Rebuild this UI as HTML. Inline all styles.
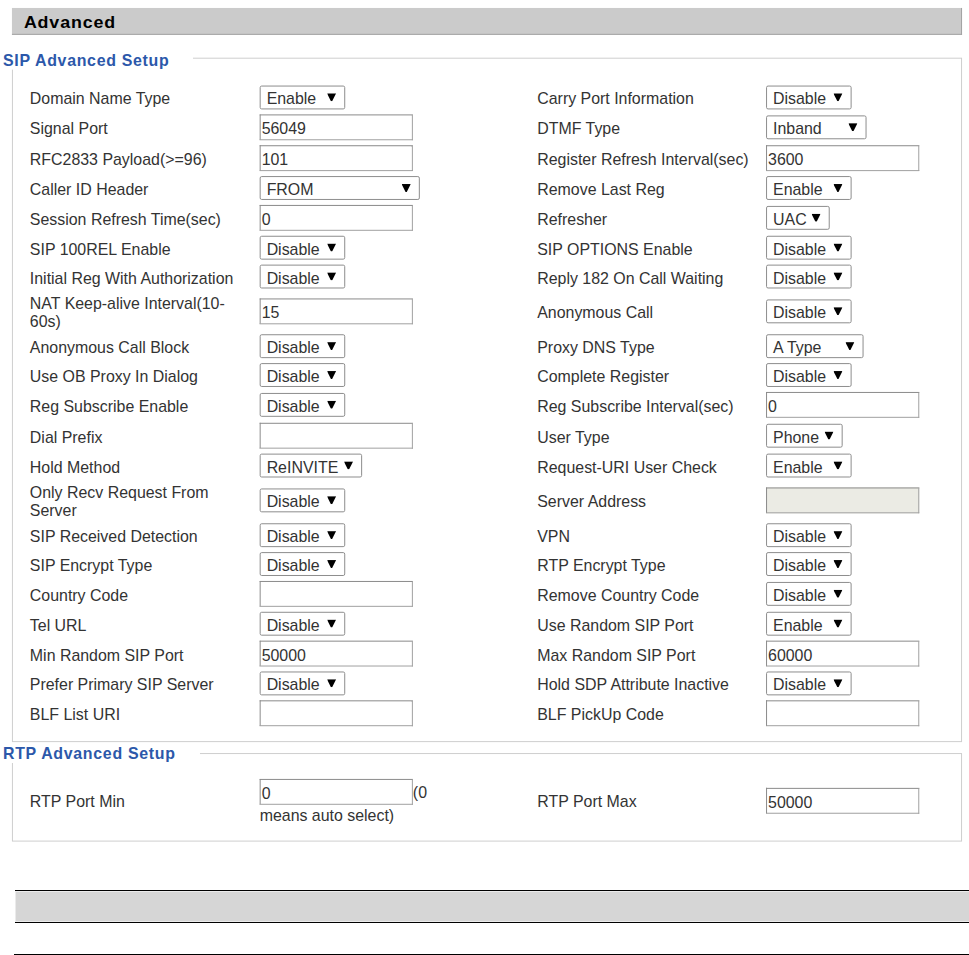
<!DOCTYPE html>
<html><head><meta charset="utf-8"><title>Advanced</title>
<style>
html,body{margin:0;padding:0;background:#fff;width:969px;height:955px;overflow:hidden}
body{font-family:"Liberation Sans",sans-serif;font-size:16px;color:#333}
#root{position:absolute;left:0;top:0;width:974px;height:960px;transform:scale(0.99487,0.99479);transform-origin:0 0;background:#fff}
.abs{position:absolute}
#hdr{position:absolute;left:12px;top:8px;width:954px;height:26px;background:#cbcbcb;border-right:1px solid #a3a3a3;border-bottom:1px solid #a3a3a3}
#hdr span{position:absolute;left:12px;top:5.5px;font-size:16.6px;font-weight:bold;letter-spacing:0.8px;line-height:18px;color:#000;transform:scaleX(1.08);transform-origin:0 0;white-space:nowrap}
.fs{position:absolute;border:1px solid #cecece}
.lg{position:absolute;background:#fff;color:#2c58aa;font-weight:bold;letter-spacing:0.7px;line-height:18px;padding-right:24px}
.lb{position:absolute;line-height:18px;white-space:nowrap}
.sel{position:absolute;height:22px;border:1px solid #8c8c8c;border-radius:2px;background:#fff}
.st{position:absolute;left:6px;top:4px;line-height:18px}
.ar{position:absolute;top:6.6px;width:9.5px;height:8.3px;background:#000;clip-path:polygon(0 0,100% 0,56% 100%,44% 100%)}
.inp{position:absolute;width:152px;height:24px;border:1px solid;border-color:#8a8a8a #a0a0a0 #a0a0a0 #8a8a8a;background:#fff}
.inp.dis{background:#ebebe4}
.it{position:absolute;left:1px;top:5px;line-height:18px}
.bar{position:absolute;left:15px;width:954px;background:#000;height:1px}
</style></head><body><div id="root">
<div id="hdr"><span>Advanced</span></div>

<div class="fs" style="left:12px;top:58px;width:953px;height:686px"></div>
<div class="lg" style="left:3px;top:52px">SIP Advanced Setup</div>
<div class="lb" style="left:30px;top:91px">Domain Name Type</div>
<div class="sel" style="left:261px;top:86px;width:84px"><span class="st">Enable</span><i class="ar" style="left:66.5px"></i></div>
<div class="lb" style="left:540px;top:91px">Carry Port Information</div>
<div class="sel" style="left:770px;top:86px;width:84px"><span class="st">Disable</span><i class="ar" style="left:66.5px"></i></div>
<div class="lb" style="left:30px;top:121px">Signal Port</div>
<div class="inp" style="left:261px;top:115px"><span class="it">56049</span></div>
<div class="lb" style="left:540px;top:121px">DTMF Type</div>
<div class="sel" style="left:770px;top:116px;width:99px"><span class="st">Inband</span><i class="ar" style="left:81.5px"></i></div>
<div class="lb" style="left:30px;top:152px">RFC2833 Payload(&gt;=96)</div>
<div class="inp" style="left:261px;top:146px"><span class="it">101</span></div>
<div class="lb" style="left:540px;top:152px">Register Refresh Interval(sec)</div>
<div class="inp" style="left:770px;top:146px"><span class="it">3600</span></div>
<div class="lb" style="left:30px;top:182px">Caller ID Header</div>
<div class="sel" style="left:261px;top:177px;width:159px"><span class="st">FROM</span><i class="ar" style="left:141.5px"></i></div>
<div class="lb" style="left:540px;top:182px">Remove Last Reg</div>
<div class="sel" style="left:770px;top:177px;width:84px"><span class="st">Enable</span><i class="ar" style="left:66.5px"></i></div>
<div class="lb" style="left:30px;top:212px">Session Refresh Time(sec)</div>
<div class="inp" style="left:261px;top:206px"><span class="it">0</span></div>
<div class="lb" style="left:540px;top:212px">Refresher</div>
<div class="sel" style="left:770px;top:207px;width:62px"><span class="st">UAC</span><i class="ar" style="left:44.5px"></i></div>
<div class="lb" style="left:30px;top:242px">SIP 100REL Enable</div>
<div class="sel" style="left:261px;top:237px;width:84px"><span class="st">Disable</span><i class="ar" style="left:66.5px"></i></div>
<div class="lb" style="left:540px;top:242px">SIP OPTIONS Enable</div>
<div class="sel" style="left:770px;top:237px;width:84px"><span class="st">Disable</span><i class="ar" style="left:66.5px"></i></div>
<div class="lb" style="left:30px;top:271px">Initial Reg With Authorization</div>
<div class="sel" style="left:261px;top:266px;width:84px"><span class="st">Disable</span><i class="ar" style="left:66.5px"></i></div>
<div class="lb" style="left:540px;top:271px">Reply 182 On Call Waiting</div>
<div class="sel" style="left:770px;top:266px;width:84px"><span class="st">Disable</span><i class="ar" style="left:66.5px"></i></div>
<div class="lb" style="left:30px;top:297px;line-height:18px">NAT Keep-alive Interval(10-<br>60s)</div>
<div class="inp" style="left:261px;top:300px"><span class="it">15</span></div>
<div class="lb" style="left:540px;top:306px">Anonymous Call</div>
<div class="sel" style="left:770px;top:301px;width:84px"><span class="st">Disable</span><i class="ar" style="left:66.5px"></i></div>
<div class="lb" style="left:30px;top:341px">Anonymous Call Block</div>
<div class="sel" style="left:261px;top:336px;width:84px"><span class="st">Disable</span><i class="ar" style="left:66.5px"></i></div>
<div class="lb" style="left:540px;top:341px">Proxy DNS Type</div>
<div class="sel" style="left:770px;top:336px;width:96px"><span class="st">A Type</span><i class="ar" style="left:78.5px"></i></div>
<div class="lb" style="left:30px;top:370px">Use OB Proxy In Dialog</div>
<div class="sel" style="left:261px;top:365px;width:84px"><span class="st">Disable</span><i class="ar" style="left:66.5px"></i></div>
<div class="lb" style="left:540px;top:370px">Complete Register</div>
<div class="sel" style="left:770px;top:365px;width:84px"><span class="st">Disable</span><i class="ar" style="left:66.5px"></i></div>
<div class="lb" style="left:30px;top:400px">Reg Subscribe Enable</div>
<div class="sel" style="left:261px;top:395px;width:84px"><span class="st">Disable</span><i class="ar" style="left:66.5px"></i></div>
<div class="lb" style="left:540px;top:400px">Reg Subscribe Interval(sec)</div>
<div class="inp" style="left:770px;top:394px"><span class="it">0</span></div>
<div class="lb" style="left:30px;top:431px">Dial Prefix</div>
<div class="inp" style="left:261px;top:425px"><span class="it"></span></div>
<div class="lb" style="left:540px;top:431px">User Type</div>
<div class="sel" style="left:770px;top:426px;width:75px"><span class="st">Phone</span><i class="ar" style="left:57.5px"></i></div>
<div class="lb" style="left:30px;top:461px">Hold Method</div>
<div class="sel" style="left:261px;top:456px;width:101px"><span class="st">ReINVITE</span><i class="ar" style="left:83.5px"></i></div>
<div class="lb" style="left:540px;top:461px">Request-URI User Check</div>
<div class="sel" style="left:770px;top:456px;width:84px"><span class="st">Enable</span><i class="ar" style="left:66.5px"></i></div>
<div class="lb" style="left:30px;top:487px;line-height:18px">Only Recv Request From<br>Server</div>
<div class="sel" style="left:261px;top:491px;width:84px"><span class="st">Disable</span><i class="ar" style="left:66.5px"></i></div>
<div class="lb" style="left:540px;top:496px">Server Address</div>
<div class="inp dis" style="left:770px;top:490px"></div>
<div class="lb" style="left:30px;top:531px">SIP Received Detection</div>
<div class="sel" style="left:261px;top:526px;width:84px"><span class="st">Disable</span><i class="ar" style="left:66.5px"></i></div>
<div class="lb" style="left:540px;top:531px">VPN</div>
<div class="sel" style="left:770px;top:526px;width:84px"><span class="st">Disable</span><i class="ar" style="left:66.5px"></i></div>
<div class="lb" style="left:30px;top:560px">SIP Encrypt Type</div>
<div class="sel" style="left:261px;top:555px;width:84px"><span class="st">Disable</span><i class="ar" style="left:66.5px"></i></div>
<div class="lb" style="left:540px;top:560px">RTP Encrypt Type</div>
<div class="sel" style="left:770px;top:555px;width:84px"><span class="st">Disable</span><i class="ar" style="left:66.5px"></i></div>
<div class="lb" style="left:30px;top:590px">Country Code</div>
<div class="inp" style="left:261px;top:584px"><span class="it"></span></div>
<div class="lb" style="left:540px;top:590px">Remove Country Code</div>
<div class="sel" style="left:770px;top:585px;width:84px"><span class="st">Disable</span><i class="ar" style="left:66.5px"></i></div>
<div class="lb" style="left:30px;top:620px">Tel URL</div>
<div class="sel" style="left:261px;top:615px;width:84px"><span class="st">Disable</span><i class="ar" style="left:66.5px"></i></div>
<div class="lb" style="left:540px;top:620px">Use Random SIP Port</div>
<div class="sel" style="left:770px;top:615px;width:84px"><span class="st">Enable</span><i class="ar" style="left:66.5px"></i></div>
<div class="lb" style="left:30px;top:650px">Min Random SIP Port</div>
<div class="inp" style="left:261px;top:644px"><span class="it">50000</span></div>
<div class="lb" style="left:540px;top:650px">Max Random SIP Port</div>
<div class="inp" style="left:770px;top:644px"><span class="it">60000</span></div>
<div class="lb" style="left:30px;top:680px">Prefer Primary SIP Server</div>
<div class="sel" style="left:261px;top:675px;width:84px"><span class="st">Disable</span><i class="ar" style="left:66.5px"></i></div>
<div class="lb" style="left:540px;top:680px">Hold SDP Attribute Inactive</div>
<div class="sel" style="left:770px;top:675px;width:84px"><span class="st">Disable</span><i class="ar" style="left:66.5px"></i></div>
<div class="lb" style="left:30px;top:710px">BLF List URI</div>
<div class="inp" style="left:261px;top:704px"><span class="it"></span></div>
<div class="lb" style="left:540px;top:710px">BLF PickUp Code</div>
<div class="inp" style="left:770px;top:704px"><span class="it"></span></div>

<div class="fs" style="left:12px;top:757px;width:953px;height:87px"></div>
<div class="lg" style="left:3px;top:749px">RTP Advanced Setup</div>
<div class="lb" style="left:30px;top:797px">RTP Port Min</div>
<div class="inp" style="left:261px;top:783px"><span class="it">0</span></div>
<div class="lb" style="left:415px;top:788px">(0</div>
<div class="lb" style="left:261px;top:811px">means auto select)</div>
<div class="lb" style="left:540px;top:797px">RTP Port Max</div>
<div class="inp" style="left:770px;top:792px"><span class="it">50000</span></div>

</div>
<div class="bar" style="top:890px"></div>
<div class="abs" style="left:15px;top:891px;width:954px;height:31px;background:#d6d6d6;box-shadow:inset 1px 1px 0 #ebebeb, inset 0 -1px 0 #ebebeb"></div>
<div class="bar" style="top:922px"></div>
<div class="bar" style="left:14px;top:954px;width:955px"></div>
</body></html>
